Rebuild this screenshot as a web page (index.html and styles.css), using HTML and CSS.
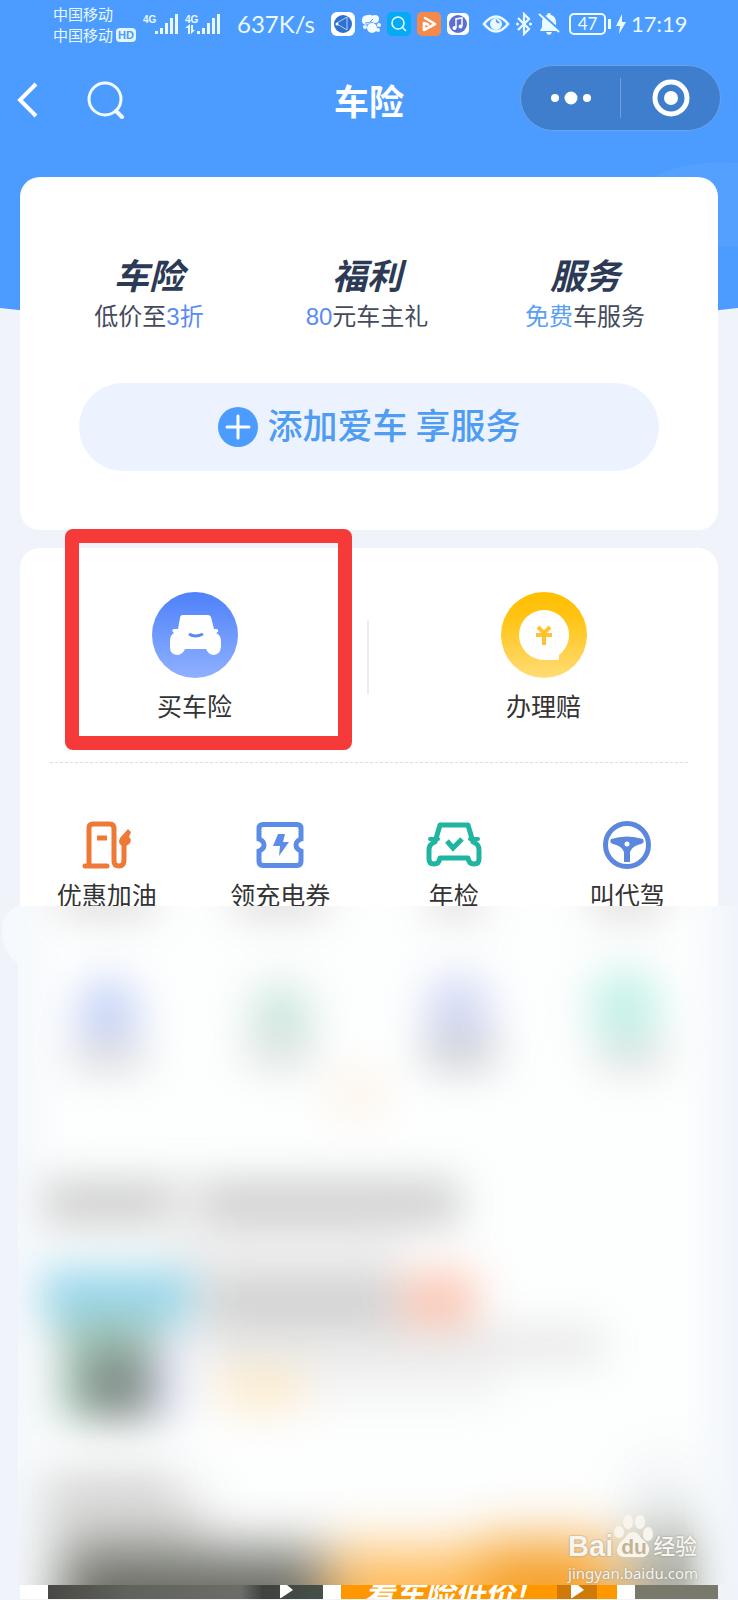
FILE: index.html
```html
<!DOCTYPE html>
<html lang="zh-CN">
<head>
<meta charset="utf-8">
<meta name="viewport" content="width=device-width, initial-scale=1">
<title>车险</title>
<link rel="stylesheet" href="styles.css">
</head>
<body>
<div class="page">
  <svg class="hero-bg" viewBox="0 0 738 330" preserveAspectRatio="none" aria-hidden="true">
    <path d="M0 0H738V308Q369 352 0 308Z" fill="#4c9bff"/>
    <path d="M640 190C655 170 690 160 738 163V247C720 245 700 246 680 252C640 250 630 230 640 190Z" fill="#54a0ff"/>
  </svg>

  <div class="status">
    <div class="carriers">
      <span>中国移动</span>
      <span class="carrier-row">中国移动 <b class="hd">HD</b></span>
    </div>
    <div class="signals">
      <svg width="36" height="24" viewBox="0 0 36 24" fill="#e9f8ff"><text class="net" x="0" y="11">4G</text><path d="M12 19h3v3h-3zM17 16h3v6h-3zM22 11h3v11h-3zM27 6h3v16h-3zM32 2h3v20h-3z"/></svg>
      <svg width="36" height="24" viewBox="0 0 36 24" fill="#e9f8ff"><text class="net" x="0" y="11">4G</text><path d="M12 19h3v3h-3zM17 16h3v6h-3zM22 11h3v11h-3zM27 6h3v16h-3zM32 2h3v20h-3z"/><path d="M3 22V16H0l5-4v10zM6 13h2v5h2l-4 4z"/></svg>
    </div>
    <span class="speed">637K/s</span>
    <div class="apps">
      <svg width="24" height="24" viewBox="0 0 24 24"><rect width="24" height="24" rx="6" fill="#fff"/><circle cx="12" cy="12" r="9" fill="#2f6fd0"/><path d="M6 11l10-6M6 12l10 6M16 5v13" stroke="#a9d4ff" stroke-width="1" fill="none"/><circle cx="6" cy="12" r="1.500" fill="#fff"/></svg>
      <svg width="20" height="20" viewBox="0 0 20 20" fill="#f2fbff"><path d="M1 8Q0 1 7 1Q12 0 13 5L9 9Q3 13 1 8Z"/><circle cx="14" cy="5" r="4"/><circle cx="11" cy="14" r="5"/><circle cx="4" cy="13" r="2"/><circle cx="18" cy="11" r="2"/><circle cx="17" cy="16" r="2"/><path d="M4 9q5 1 8-4" fill="none" stroke="#4c9bff"/></svg>
      <svg width="24" height="24" viewBox="0 0 24 24"><rect width="24" height="24" rx="5" fill="#05aaf7"/><circle cx="11" cy="11" r="6" fill="none" stroke="#e9fbff" stroke-width="1.6"/><path d="M15 15l4 4" stroke="#e9fbff" stroke-width="1.6"/></svg>
      <svg width="24" height="24" viewBox="0 0 24 24"><rect width="24" height="24" rx="5" fill="#f5894a"/><path d="M8 6l10 6-11 6v-7l4 1.500" fill="none" stroke="#fff" stroke-width="2.600" stroke-linejoin="round" stroke-linecap="round"/></svg>
      <svg width="22" height="22" viewBox="0 0 22 22"><rect width="22" height="22" rx="5" fill="#fff"/><circle cx="11" cy="11" r="9" fill="#5a6fd6"/><path d="M9 15V6l6-1v8" fill="none" stroke="#fff" stroke-width="1.500"/><circle cx="7.500" cy="15" r="2" fill="#fff"/><circle cx="13.500" cy="13.500" r="2" fill="#fff"/></svg>
    </div>
    <div class="system">
      <svg width="28" height="20" viewBox="0 0 28 20"><path d="M2 10Q14-5 26 10Q14 25 2 10Z" fill="none" stroke="#eafcff" stroke-width="2.600"/><circle cx="14" cy="10" r="6" fill="#eafcff"/><path d="M14 5a3 3 0 0 0 4 4z" fill="#4c9bff"/></svg>
      <svg width="18" height="24" viewBox="0 0 18 24"><path d="M3 6l11 11-5 5V2l5 5L3 18" fill="none" stroke="#eafcff" stroke-width="2.200"/><circle cx="2.500" cy="12" r="1.500" fill="#eafcff"/><circle cx="15.500" cy="12" r="1.500" fill="#eafcff"/></svg>
      <svg width="22" height="24" viewBox="0 0 22 24"><path d="M11 1q2 0 2 2q5 1 5 8v4l2 4H2l2-4v-4q0-7 5-8q0-2 2-2zM8 20h6q-1 3-3 3t-3-3z" fill="#eafcff"/><path d="M2 1l20 18" stroke="#4c9bff" stroke-width="3"/><path d="M1 2l20 18" stroke="#eafcff" stroke-width="2"/></svg>
      <span class="battery">47</span>
      <svg width="10" height="20" viewBox="0 0 10 20"><path d="M6 0L0 12h4L3 20l7-12H6z" fill="#eafcff"/></svg>
      <span class="clock">17:19</span>
    </div>
  </div>

  <header class="nav">
    <div class="nav-left">
      <button class="icon-btn" aria-label="返回"><svg width="22" height="36" viewBox="0 0 22 36"><path d="M19 2L3 18l16 16" fill="none" stroke="#fff" stroke-width="4"/></svg></button>
      <button class="icon-btn" aria-label="搜索"><svg width="38" height="38" viewBox="0 0 38 38" fill="none" stroke="#f2fbff" stroke-width="3"><circle cx="18" cy="18" r="16"/><path d="M29 30l6 6" stroke-width="4" stroke-linecap="round"/></svg></button>
    </div>
    <h1 class="nav-title">车险</h1>
    <div class="capsule">
      <button class="cap-btn" aria-label="更多"><svg width="40" height="14" viewBox="0 0 40 14" fill="#fff"><circle cx="4" cy="7" r="4"/><circle cx="20" cy="7" r="6.500"/><circle cx="36" cy="7" r="4"/></svg></button>
      <span class="cap-line"></span>
      <button class="cap-btn" aria-label="关闭"><svg width="38" height="38" viewBox="0 0 38 38"><circle cx="19" cy="19" r="16" fill="none" stroke="#fff" stroke-width="5"/><circle cx="19" cy="19" r="7" fill="#fff"/></svg></button>
    </div>
  </header>

  <main>
    <section class="card promo">
      <div class="benefits">
        <div><h2>车险</h2><p>低价至<em>3折</em></p></div>
        <div><h2>福利</h2><p><em>80</em>元车主礼</p></div>
        <div><h2>服务</h2><p><em class="sky">免费</em>车服务</p></div>
      </div>
      <button class="add-car">
        <svg width="40" height="40" viewBox="0 0 40 40"><circle cx="20" cy="20" r="20" fill="#4c9bff"/><path d="M9 20h22M20 9v22" stroke="#fff" stroke-width="3" stroke-linecap="round"/></svg>
        <span>添加爱车 享服务</span>
      </button>
    </section>

    <section class="card services">
      <div class="primary">
        <a href="#buy" class="main-entry marked">
          <svg width="86" height="86" viewBox="0 0 86 86"><defs><linearGradient id="blue" x1="0" y1="0" x2="0" y2="1"><stop offset="0" stop-color="#4e82fa"/><stop offset="1" stop-color="#8fb0ff"/></linearGradient></defs><circle cx="43" cy="43" r="43" fill="url(#blue)"/><path d="M31 23H56Q58 23 59 25L62 37H65Q67 38 66 40L64 41Q69 43 69 49V55Q68 63 61 63Q56 62 54 57H33Q31 62 26 63Q18 63 18 55V49Q18 43 22 41L21 40Q19 38 22 37H26L28 26Q28 23 31 23Z" fill="#fff"/><path d="M37 42q6 4 14 0" fill="none" stroke="#5c89f5" stroke-width="3"/></svg>
          <span>买车险</span>
        </a>
        <a href="#claim" class="main-entry">
          <svg width="86" height="86" viewBox="0 0 86 86"><defs><linearGradient id="gold" x1="0" y1="0" x2="0" y2="1"><stop offset="0" stop-color="#ffbf00"/><stop offset=".3" stop-color="#ffc414"/><stop offset="1" stop-color="#ffdc76"/></linearGradient></defs><circle cx="43" cy="43" r="43" fill="url(#gold)"/><path d="M43 18A25 25 0 0 1 58 63V67Q58 68 56 68H43A25 25 0 0 1 43 18Z" fill="#fff"/><path d="M37 35l6 6 6-6M35 43h16M43 40v13" fill="none" stroke="#fcc52f" stroke-width="4"/></svg>
          <span>办理赔</span>
        </a>
      </div>
      <div class="quick">
        <a href="#fuel" class="entry">
          <svg width="50" height="48" viewBox="0 0 50 48" fill="none" stroke="#ee7836" stroke-width="5"><path d="M7 45V7Q7 3 11 3H28Q32 3 32 8V40Q32 45 37 45Q42 45 42 39V20"/><path d="M3 45H25" stroke-linecap="round"/><path d="M15 17h10"/><path d="M38 17L46 8l3 3-2 5q3 2 1 6-2 3-7 3-4-1-4-5z" fill="#ee7836" stroke="none"/></svg>
          <span>优惠加油</span>
        </a>
        <a href="#charge" class="entry">
          <svg width="50" height="48" viewBox="0 0 50 48"><path d="M8 3.500H42Q46 3.500 46 7.500V18Q41 20 41 24T46 30V40Q46 44.500 42 44.500H8Q4 44.500 4 40V30Q9 28 9 24T4 18V7.500Q4 3.500 8 3.500Z" fill="none" stroke="#5b8ce8" stroke-width="5"/><path d="M23 13h7l-2 8h6L24 35l1-10h-7z" fill="#5b8ce8"/></svg>
          <span>领充电券</span>
        </a>
        <a href="#inspect" class="entry">
          <svg width="56" height="48" viewBox="0 0 56 48"><path d="M14 4H42L47 21Q53 23 53 29V38Q53 43 48 43Q43 43 42 37H14Q13 43 8 43Q3 43 3 38V29Q3 23 9 21Z" fill="none" stroke="#1fb5a0" stroke-width="5" stroke-linejoin="round"/><path d="M4 18h8M44 18h8" stroke="#1fb5a0" stroke-width="4" stroke-linecap="round"/><path d="M21 20l6 7 9-9" fill="none" stroke="#1fb5a0" stroke-width="5"/></svg>
          <span>年检</span>
        </a>
        <a href="#driver" class="entry">
          <svg width="48" height="48" viewBox="0 0 48 48"><circle cx="24" cy="24" r="21.500" fill="none" stroke="#5b87dc" stroke-width="5"/><path d="M8 18Q24 13 40 18Q42 22 38 23Q29 25 27 31V41H21V31Q19 25 10 23Q6 22 8 18Z" fill="#5b87dc"/><circle cx="24" cy="23" r="2.500" fill="#fff"/></svg>
          <span>叫代驾</span>
        </a>
      </div>
    </section>

    <div class="frost">
      <svg viewBox="0 0 738 679" preserveAspectRatio="none" aria-hidden="true">
        <defs>
          <filter id="soft" filterUnits="userSpaceOnUse" x="-60" y="-100" width="860" height="860" color-interpolation-filters="sRGB"><feGaussianBlur stdDeviation="21"/></filter>
          <filter id="wide" filterUnits="userSpaceOnUse" x="-60" y="450" width="860" height="420" color-interpolation-filters="sRGB"><feGaussianBlur stdDeviation="27"/></filter>
          <linearGradient id="edge"><stop offset="0" stop-color="#f1f5fb" stop-opacity="0"/><stop offset="1" stop-color="#f1f5fb"/></linearGradient>
          <linearGradient id="edgeLeft"><stop offset="0" stop-color="#f6f9fd"/><stop offset="1" stop-color="#f6f9fd" stop-opacity="0"/></linearGradient>
          <clipPath id="panel"><path d="M18 0H738V679H18Z"/></clipPath>
        </defs>
        <path d="M18 0Q2 6 2 26Q3 46 18 58Z" fill="#f6f9fd"/>
        <g clip-path="url(#panel)">
          <path d="M18 0H738V679H18Z" fill="#fdfefe"/>
          <path d="M18 0H70V679H18Z" fill="url(#edgeLeft)"/>
          <g filter="url(#soft)" opacity=".82">
            <path d="M60-24H154V10H60ZM234-24H326V10H234ZM430-24H482V10H430ZM592-24H664V10H592Z" fill="#d4d2d1"/>
            <ellipse cx="108" cy="108" rx="32" ry="36" fill="#bccbf6"/>
            <ellipse cx="108" cy="150" rx="44" ry="17" fill="#d6d6d8"/>
            <ellipse cx="281" cy="114" rx="32" ry="38" fill="#c4e2d8"/>
            <ellipse cx="281" cy="150" rx="40" ry="15" fill="#dcdede"/>
            <ellipse cx="458" cy="106" rx="33" ry="38" fill="#c8d1f3"/>
            <ellipse cx="460" cy="146" rx="42" ry="20" fill="#c5c7cd"/>
            <ellipse cx="625" cy="102" rx="37" ry="40" fill="#b9efe4"/>
            <ellipse cx="632" cy="150" rx="40" ry="15" fill="#d4d7d7"/>
            <ellipse cx="358" cy="188" rx="28" ry="22" fill="#fdf0df"/>
            <path d="M44 274H460V320H206V310H165V320H44Z" fill="#c4c4c4"/>
            <path d="M170 280H204V440H170Z" fill="#ebebeb"/>
            <path d="M206 328H400V372H206Z" fill="#ececec"/>
            <path d="M42 362H192V420H42Z" fill="#85cfe7"/>
            <path d="M60 412H158V514H60Z" fill="#8bb5a2"/>
            <path d="M86 448H152V514H86Z" fill="#67766f"/>
            <path d="M152 430H186V516H152Z" fill="#d8dbee"/>
            <path d="M206 370H398V420H206Z" fill="#c8c8c8"/>
            <path d="M402 366H476V426H402Z" fill="#fcbda6"/>
            <path d="M206 420H604V458H206Z" fill="#e4e4e4"/>
            <path d="M218 460H304V504H218Z" fill="#fce8c4"/>
            <path d="M306 462H500V496H306Z" fill="#f0f0f0"/>
            <path d="M48 570H170V606H48Z" fill="#d4d4d4"/>
          </g>
          <g filter="url(#wide)" opacity=".94">
            <path d="M48 588H200V640H48Z" fill="#cfd0ce"/>
            <path d="M60 644H325V840H60Z" fill="#62645b"/>
            <path d="M330 644H620V840H330Z" fill="#ffb64e"/>
            <path d="M480 634H606V840H480Z" fill="#f59b1d"/>
            <path d="M636 560H690V640H636Z" fill="#e8edf0"/>
            <path d="M634 626H706V840H634Z" fill="#9a9e92"/>
          </g>
          <path d="M684 0H738V679H684Z" fill="url(#edge)"/>
        </g>
      </svg>
      <div class="watermark">
        <div class="wm-brand">
          <span>Bai</span>
          <span class="paw">
            <svg width="40" height="44" viewBox="0 0 40 44" fill="#f8f5ef"><ellipse cx="6" cy="18" rx="5" ry="6"/><ellipse cx="15" cy="8" rx="5" ry="7"/><ellipse cx="27" cy="8" rx="5" ry="7"/><ellipse cx="35" cy="20" rx="5" ry="7"/><path d="M20 18q5 0 8 6 9 6 8 13-2 7-9 6H12Q5 43 4 37q0-7 8-13 3-6 8-6z"/></svg>
            <b>du</b>
          </span>
          <span class="wm-cn">经验</span>
        </div>
        <div class="wm-url">jingyan.baidu.com</div>
      </div>
    </div>

    <div class="thumbs">
      <div class="thumb dark"><svg width="14" height="14" viewBox="0 0 14 14"><path d="M1 0H8L14 5 2 13H1Z" fill="#fff"/></svg></div>
      <div class="thumb orange"><span>看车险低价!</span><i class="play"><svg width="14" height="14" viewBox="0 0 14 14"><path d="M1 0H8L14 5 2 13H1Z" fill="#fff"/></svg></i></div>
      <div class="thumb moss"></div>
    </div>
  </main>
</div>
</body>
</html>
```
FILE: styles.css
```css
* { box-sizing: border-box; }
body {
  margin: 0;
  background: #f0f4fa;
  font-family: "Noto Sans CJK SC", sans-serif;
  color: #333;
}
h1, h2, p { margin: 0; }
a { color: inherit; text-decoration: none; }
button { border: 0; padding: 0; background: none; font: inherit; color: inherit; }
svg { display: block; flex: none; }
.page { position: relative; overflow: hidden; }
.hero-bg { position: absolute; top: 0; left: 0; width: 100%; height: 330px; }

.status {
  position: relative;
  display: flex;
  align-items: center;
  height: 48px;
  padding-left: 53px;
  color: #eafaff;
  white-space: nowrap;
}
.carriers { display: flex; flex-direction: column; width: 90px; font-size: 15px; line-height: 21px; }
.carrier-row { display: flex; align-items: center; gap: 3px; }
.hd { padding: 0 2px; border-radius: 4px; background: #e3f5ff; color: #4c9bff; font: bold 11px/14px "Liberation Sans", sans-serif; }
.signals { display: flex; gap: 6px; width: 94px; }
.net { font: bold 10px "Liberation Sans", sans-serif; }
.speed { width: 94px; font: 24px/32px Lato, sans-serif; }
.apps { display: flex; align-items: center; gap: 6px; width: 151px; }
.system { display: flex; align-items: center; gap: 5px; }
.battery {
  position: relative;
  width: 37px;
  margin: 0 5px 0 4px;
  border: 2px solid #eafcff;
  border-radius: 5px;
  font: 17px/18px Lato, sans-serif;
  text-align: center;
}
.battery::after { content: ""; position: absolute; top: 4px; right: -7px; width: 3px; height: 10px; background: #eafcff; }
.clock { font: 22px/32px Lato, sans-serif; }

.nav {
  position: relative;
  display: grid;
  grid-template-columns: 1fr auto 1fr;
  align-items: center;
  padding: 17px 17px 46px 17px;
}
.nav-left { display: flex; align-items: center; gap: 48px; padding-top: 3px; }
.nav-title { padding-top: 4px; color: #fff; font-size: 35px; line-height: 48px; font-weight: 700; }
.capsule {
  justify-self: end;
  display: flex;
  align-items: center;
  width: 201px;
  height: 66px;
  border: 1px solid #68a4ec;
  border-radius: 33px;
  background: #3f7ecc;
}
.cap-btn { flex: 1; display: flex; justify-content: center; }
.cap-line { width: 1px; height: 40px; background: #6f9fdc; }

.card { position: relative; margin: 0 20px; border-radius: 20px; background: #fff; }
.promo { padding: 77px 20px 59px; }
.benefits { display: grid; grid-template-columns: repeat(3, 1fr); padding-right: 4px; text-align: center; }
.benefits h2 { color: #2c3a55; font-size: 35px; line-height: 40px; font-style: italic; font-weight: 700; }
.benefits p { margin-top: 7px; color: #444b5c; font: 24px/32px "Liberation Sans", "Noto Sans CJK SC", sans-serif; }
.benefits em { color: #5a8cf5; font-style: normal; }
.benefits .sky { color: #5aa0f5; }
.add-car {
  display: flex;
  align-items: center;
  justify-content: center;
  gap: 10px;
  width: calc(100% - 78px);
  height: 88px;
  margin: 50px auto 0;
  border-radius: 44px;
  background: #ecf3fe;
  color: #4f9cf3;
  font-size: 35px;
  line-height: 50px;
  font-weight: 500;
}
.add-car span { padding-bottom: 6px; }

.services { margin-top: 18px; border-radius: 20px 20px 0 0; }
.primary { position: relative; display: grid; grid-template-columns: 1fr 1fr; padding: 44px 0 42px; }
.primary::before { content: ""; position: absolute; left: 50%; top: 72px; width: 2px; height: 74px; background: #ececee; margin-left: -2px; }
.primary::after { content: ""; position: absolute; left: 30px; right: 30px; bottom: 0; border-bottom: 1px dashed #dcdcdc; }
.main-entry, .entry { display: flex; flex-direction: column; align-items: center; font-size: 25px; line-height: 32px; }
.main-entry { position: relative; gap: 11px; }
.marked::after {
  content: "";
  position: absolute;
  top: -63px;
  left: 45px;
  right: 17px;
  bottom: -29px;
  border: 14px solid #f63a3a;
  border-radius: 8px;
  z-index: 2;
}
.quick { display: grid; grid-template-columns: repeat(4, 1fr); padding: 58px 4px 0 0; }
.entry { gap: 9px; }

.frost { position: relative; margin-top: -4px; background: #f0f4fa; }
.frost > svg { width: 100%; height: 679px; }
.watermark { position: absolute; right: 40px; bottom: 1px; color: #f8f5ef; text-shadow: 0 0 2px #8a8a80; }
.wm-brand { display: flex; align-items: flex-end; font: bold 29px/32px "Liberation Sans", sans-serif; }
.paw { position: relative; padding-bottom: 4px; }
.paw b { position: absolute; left: 8px; bottom: 4px; color: #c4b493; font-size: 21px; line-height: 22px; text-shadow: none; }
.wm-cn { font: 500 22px/36px "Noto Sans CJK SC", sans-serif; }
.wm-url { font: 15px/22px "Noto Sans", sans-serif; }

.thumbs {
  display: grid;
  grid-template-columns: 275fr 275fr 83fr;
  gap: 18px;
  height: 14px;
  margin: 0 20px;
  padding-left: 28px;
  overflow: hidden;
  background: #fff;
}
.thumb { display: flex; height: 14px; overflow: hidden; }
.dark { justify-content: flex-end; padding-right: 30px; background: linear-gradient(90deg, #484944, #60625c 30%, #6c6d69 70%, #3f423f 78%, #465049); }
.orange { align-items: center; justify-content: space-between; padding: 0 20px 0 23px; background: #ff9800; color: #fff; }
.orange span { font-size: 30px; line-height: 40px; font-weight: 700; font-style: italic; white-space: nowrap; }
.play { display: flex; padding: 0 13px; background: #cf7908; }
.moss { background: #78796a; }
```
